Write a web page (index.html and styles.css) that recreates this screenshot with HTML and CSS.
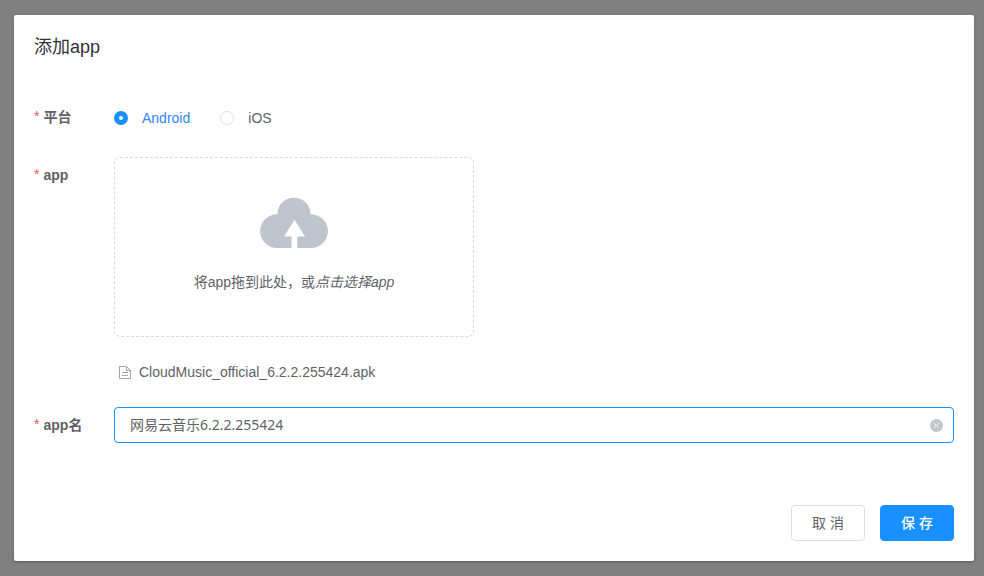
FILE: index.html
```html
<!DOCTYPE html>
<html lang="zh-CN">
<head>
<meta charset="utf-8">
<title>添加app</title>
<link rel="stylesheet" href="styles.css">
</head>
<body>
<section class="dialog" role="dialog">
  <h1 class="title">添加app</h1>
  <form class="form">
    <div class="row platform">
      <div class="label"><span class="star">*</span>平台</div>
      <div class="radios">
        <label class="radio checked"><span class="dot"></span>Android</label>
        <label class="radio"><span class="dot"></span>iOS</label>
      </div>
    </div>
    <div class="row upload-row">
      <div class="label"><span class="star">*</span>app</div>
      <div class="upload">
        <div class="dragger">
          <svg class="cloud" width="68" height="51" viewBox="0 0 68 51">
            <path fill="#c0c4cc" d="M17 51A17 17 0 0 1 0 34A17 17 0 0 1 17.500 17.300C17.500 7.500 24.500.7 34 .7S50.500 7.500 50.500 17.300A17 17 0 0 1 68 34A17 17 0 0 1 51 51H37.300V39.500H45L34.500 22.700L24 39.500H31.500V51Z"/>
          </svg>
          <div class="hint">将app拖到此处，或<em>点击选择app</em></div>
        </div>
        <div class="file">
          <svg class="doc" width="12" height="13" viewBox="0 0 12 13" fill="none" stroke="#a0a5ae">
            <path d="M.5.500H7.500L11.500 4.500V12.500H.500ZM7.500.500V4.500H11.500M3 6.500H9M3 9.500H9"/>
          </svg>
          <span>CloudMusic_official_6.2.2.255424.apk</span>
        </div>
      </div>
    </div>
    <div class="row name-row">
      <div class="label"><span class="star">*</span>app名</div>
      <div class="field">
        <input class="input" type="text" value="网易云音乐6.2.2.255424">
        <svg class="clear" width="13" height="13" viewBox="0 0 13 13">
          <circle cx="6.500" cy="6.500" r="6.500" fill="#c0c4cc"/>
          <path d="M4.200 4.200L8.800 8.800M8.800 4.200L4.200 8.800" stroke="#fff" stroke-width=".9"/>
        </svg>
      </div>
    </div>
  </form>
  <footer class="footer">
    <button class="btn" type="button">取 消</button>
    <button class="btn primary" type="button">保 存</button>
  </footer>
</section>
</body>
</html>
```
FILE: styles.css
```css
* { box-sizing: border-box; }

body {
  margin: 0;
  height: 576px;
  padding: 15px 10px 15px 14px;
  overflow: hidden;
  background: #808080;
  color: #606266;
  font: 14px/36px "Liberation Sans", "Noto Sans CJK SC", sans-serif;
}

.dialog {
  display: flex;
  flex-direction: column;
  height: 546px;
  padding: 20px;
  border-radius: 2px;
  background: #fff;
  box-shadow: 0 1px 3px rgba(0, 0, 0, .3);
}

.title {
  margin: 0;
  color: #303133;
  font-size: 18px;
  font-weight: 400;
  line-height: 24px;
}

.form { margin-top: 40px; }
.row { display: flex; }
.label { flex: 0 0 80px; font-weight: 700; }
.star {
  display: inline-block;
  width: 9.500px;
  color: #f5515f;
  font-weight: 400;
  line-height: 1;
  vertical-align: 1px;
}

.radios { display: flex; gap: 30px; padding-top: 3px; line-height: 30px; height: 34px; }
.radio { display: flex; align-items: center; gap: 14px; }
.radio.checked { color: #2f86f6; }
.dot { width: 14px; height: 14px; border: 1px solid #dcdfe6; border-radius: 50%; }
.checked .dot { border: 5px solid #1890ff; }

.upload-row { margin-top: 22px; }
.dragger {
  display: flex;
  flex-direction: column;
  align-items: center;
  width: 360px;
  height: 180px;
  padding-top: 39px;
  border: 1px dashed #d9d9d9;
  border-radius: 6px;
}
.cloud { display: block; }
.hint { margin-top: 24px; line-height: 20px; white-space: nowrap; }
.file { display: flex; align-items: center; gap: 8px; height: 25px; margin: 23px 0 0 5px; line-height: 25px; }

.name-row { margin-top: 22px; }
.field { display: flex; flex: 1; align-items: center; height: 36px; padding: 0 10px 0 15px; border: 1px solid #1890ff; border-radius: 4px; }
.input {
  flex: 1;
  min-width: 0;
  padding: 0;
  border: 0;
  outline: 0;
  background: none;
  color: #606266;
  font: 14px/20px "Noto Sans", "Noto Sans CJK SC", sans-serif;
}

.footer { display: flex; justify-content: flex-end; gap: 15px; margin-top: auto; }
.btn {
  width: 74px;
  height: 36px;
  padding: 0;
  border: 1px solid #dcdfe6;
  border-radius: 4px;
  background: #fff;
  color: #606266;
  font: 14px/20px "Liberation Sans", "Noto Sans CJK SC", sans-serif;
}
.primary { border-color: #1890ff; background: #1890ff; color: #fff; font-weight: 500; }
```
